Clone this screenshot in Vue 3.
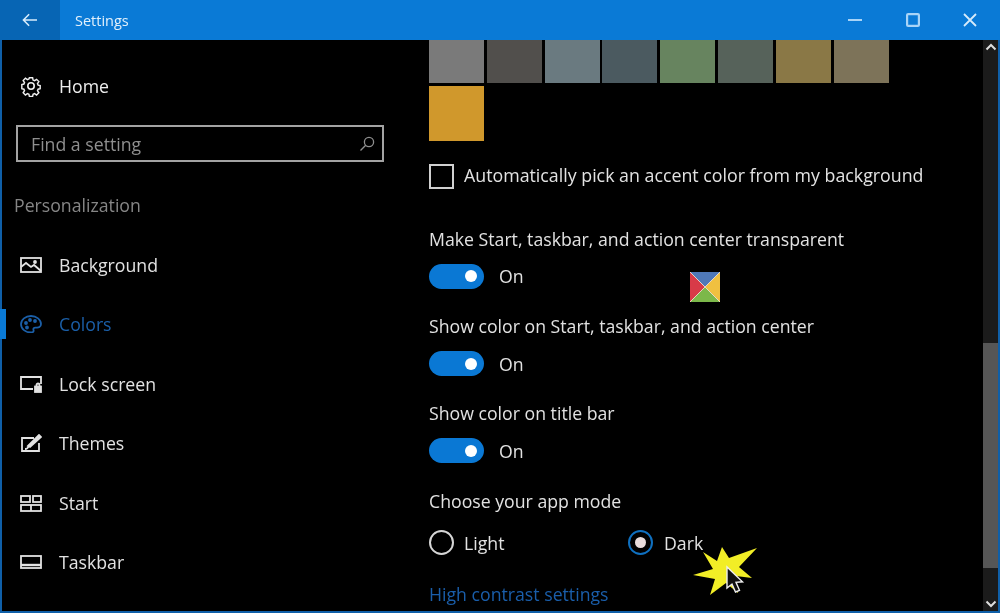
<script setup>
const swatches = ['#7a7a7a','#514f4c','#6a7a80','#4b5a60','#67845f','#56625a','#8a7846','#7d7359','#d0982c']
const nav = [
  { label: 'Background', icon: 'bg' },
  { label: 'Colors', icon: 'colors', active: true },
  { label: 'Lock screen', icon: 'lock' },
  { label: 'Themes', icon: 'themes' },
  { label: 'Start', icon: 'start' },
  { label: 'Taskbar', icon: 'taskbar' }
]
const toggles = ['Make Start, taskbar, and action center transparent','Show color on Start, taskbar, and action center','Show color on title bar']
</script>

<template>
  <div class="window">
    <header class="titlebar">
      <button class="back" aria-label="Back">
        <svg width="16" height="14" viewBox="0 0 18 16" fill="none" stroke="currentColor" stroke-width="1.800"><path d="M1 8h16M8 1.500 1.500 8 8 14.500"/></svg>
      </button>
      <span class="title">Settings</span>
      <div class="controls">
        <svg width="16" height="16" viewBox="0 0 16 16" fill="none" stroke="#a9d4f7" stroke-width="2"><path d="M1 8h14"/></svg>
        <svg width="16" height="16" viewBox="0 0 16 16" fill="none" stroke="#a9d4f7" stroke-width="2.200"><rect x="2.100" y="2.100" width="11.800" height="11.800" rx="1"/></svg>
        <svg width="16" height="16" viewBox="0 0 16 16" fill="none" stroke="#d5ebfb" stroke-width="1.800"><path d="m2 2 12 12M14 2 2 14"/></svg>
      </div>
    </header>

    <div class="body">
      <aside class="sidebar">
        <div class="home">
          <span class="nav-icon">
            <svg width="22" height="22" viewBox="0 0 22 22" fill="none" stroke="currentColor" stroke-width="1.600"><circle cx="11" cy="11" r="3.200"/><path d="M9.200 1.800h3.600l.5 2.600 1.700.7 2.200-1.500 2.500 2.500-1.500 2.200.7 1.700 2.300.5v3.600l-2.300.5-.7 1.700 1.500 2.200-2.500 2.500-2.200-1.500-1.700.7-.5 2.300H9.200l-.5-2.300-1.700-.7-2.200 1.500-2.500-2.500 1.500-2.200-.7-1.700-2.300-.5V9.300l2.300-.5.7-1.700-1.500-2.200 2.500-2.500L7 3.900l1.700-.7z" transform="translate(1.100 1.100) scale(.9)"/></svg>
          </span>
          <span>Home</span>
        </div>
        <div class="search">
          <span>Find a setting</span>
          <svg width="16" height="16" viewBox="0 0 16 16" fill="none" stroke="currentColor" stroke-width="1.300"><circle cx="10" cy="6" r="4.600"/><path d="M6.700 9.300 1.500 14.500"/></svg>
        </div>
        <div class="section">Personalization</div>
        <nav class="nav">
          <div v-for="item in nav" :key="item.label" class="nav-item" :class="{ active: item.active }">
            <span class="nav-icon">
              <svg width="22" height="18" viewBox="0 0 22 18" fill="none" stroke="currentColor" stroke-width="1.800">
                <template v-if="item.icon === 'bg'">
                  <rect x="1" y="2" width="20" height="14"/><path d="m1 11 5-4 5 4 3-2 7 6"/><circle cx="15" cy="6" r="1"/>
                </template>
                <template v-else-if="item.icon === 'colors'">
                  <path d="M11 1c5.500 0 10 3.600 10 8 0 3-2.500 4-5 3.600-2-.3-3 1-2.500 2.400.5 1.500-.5 2.500-2.500 2.500-5.500 0-10-3.700-10-8.300S5.500 1 11 1z"/><circle cx="6" cy="8" r="1"/><circle cx="10" cy="5" r="1"/><circle cx="15" cy="6" r="1"/><circle cx="7" cy="12.500" r="1"/>
                </template>
                <template v-else-if="item.icon === 'lock'">
                  <path d="M13 14H1V2h20v7"/><rect x="15" y="11.500" width="6" height="5.500" fill="currentColor"/><path d="M16.500 11.500V10a1.500 1.500 0 0 1 3 0v1.500"/>
                </template>
                <template v-else-if="item.icon === 'themes'">
                  <path d="M14 4H2v13h17V9"/><path d="m8 12 11-11 2 2-11 10z" fill="currentColor"/><path d="M5 15c2 0 3-1 3.500-2.500"/>
                </template>
                <template v-else-if="item.icon === 'start'">
                  <rect x="1" y="2" width="9" height="6"/><rect x="13" y="2" width="8" height="6"/><rect x="1" y="11" width="20" height="6"/><path d="M11 11v6"/>
                </template>
                <template v-else>
                  <rect x="1" y="3" width="20" height="12"/><path d="M1 12h20" stroke-width="2.400"/>
                </template>
              </svg>
            </span>
            <span>{{ item.label }}</span>
          </div>
        </nav>
      </aside>

      <main class="content">
        <div class="swatches">
          <div v-for="(c, i) in swatches" :key="i" class="swatch" :style="{ background: c }"></div>
        </div>
        <label class="auto"><span class="checkbox"></span><span class="auto-text">Automatically pick an accent color from my background</span></label>
        <div class="toggles">
          <div v-for="t in toggles" :key="t" class="toggle-row">
            <div class="label">{{ t }}</div>
            <div class="toggle-line"><span class="toggle"><i></i></span><span>On</span></div>
          </div>
        </div>
        <div class="label mode">Choose your app mode</div>
        <div class="radios">
          <div class="radio-item"><span class="radio"></span>Light</div>
          <div class="radio-item"><span class="radio on"><i></i></span>Dark</div>
        </div>
        <a class="link">High contrast settings</a>

        <svg class="logo" width="30" height="30" viewBox="0 0 31 31">
          <path d="M0 0h31L15.500 15.500z" fill="#4f78b8"/><path d="M31 0v31L15.500 15.500z" fill="#f0c040"/><path d="M0 31h31L15.500 15.500z" fill="#7cb84a"/><path d="M0 0v31l15.500-15.500z" fill="#d83a48"/><path d="m0 0 31 31M31 0 0 31" stroke="#e9d8c8" stroke-width="1"/>
        </svg>
        <svg class="spark" width="66" height="50" viewBox="0 0 66 50">
          <path d="M10 5 24 14 29 0 36 11 64 1 46 20 59 31 43 29 45 46 33 36 17 48 22 32 0 28 20 22Z" fill="#f2ee26"/>
          <path d="M34 20v21l5-4 3.500 8 4-1.700-3.500-8 6.500-.5z" fill="#111" stroke="#eee" stroke-width="1.400"/>
        </svg>
      </main>

      <div class="scrollbar">
        <svg class="chev" width="12" height="8" viewBox="0 0 12 8" fill="none" stroke="#ddd" stroke-width="2"><path d="m1.500 6.500 4.500-4.500 4.500 4.500"/></svg>
        <div class="track"><div class="thumb"></div></div>
        <svg class="chev" width="12" height="8" viewBox="0 0 12 8" fill="none" stroke="#ddd" stroke-width="2"><path d="m1.500 1.500 4.500 4.500 4.500-4.500"/></svg>
      </div>
    </div>
  </div>
</template>

<style>
html, body { margin: 0; background: #000; overflow: hidden; }
</style>

<style scoped>
.window { width: 1000px; height: 613px; display: flex; flex-direction: column; background: #000; color: #e2e2e2; font-family: "Open Sans", "Noto Sans", sans-serif; font-size: 17.700px; box-sizing: border-box; border: solid #0f5fa8; border-width: 0 2px 2px; filter: blur(.6px); }
.titlebar { height: 40px; margin: 0 -2px; flex: none; display: flex; align-items: center; background: #0a7ad6; color: #fff; }
.back { width: 60px; height: 40px; border: 0; padding: 0; background: #0765b4; color: #d8ecfb; display: flex; align-items: center; justify-content: center; }
.title { margin-left: 15px; font-size: 14.500px; color: #e2f0fb; }
.controls { margin-left: auto; width: 153px; padding-right: 22px; box-sizing: border-box; display: flex; justify-content: space-between; }
.body { flex: 1; display: flex; min-height: 0; }
.sidebar { width: 427px; flex: none; display: flex; flex-direction: column; }
.home { display: flex; align-items: center; height: 26px; margin-top: 33px; padding-left: 18px; color: #eee; }
.nav-icon { width: 22px; margin-right: 17px; display: flex; justify-content: center; }
.search { width: 368px; height: 37px; margin: 26px 0 0 14px; box-sizing: border-box; border: 2.500px solid #a3a3a3; display: flex; align-items: center; justify-content: space-between; padding: 0 7px 0 13px; color: #8f8f8f; }
.section { margin: 28px 0 0 12px; height: 30px; line-height: 30px; color: #868686; }
.nav { margin-top: 15px; display: flex; flex-direction: column; }
.nav-item { height: 59.500px; display: flex; align-items: center; padding-left: 18px; position: relative; }
.nav-item.active { color: #1b5fa8; }
.nav-item.active::before { content: ""; position: absolute; left: -2px; top: 14px; width: 6px; height: 30px; background: #0a7ad6; }
.content { position: relative; flex: 1; min-width: 0; }
.swatches { display: grid; grid-template-columns: repeat(8, 55px); grid-template-rows: 43px 55px; gap: 3px 2.800px; }
.swatch { width: 55px; }
.auto { display: flex; align-items: center; margin-top: 22px; height: 26px; }
.auto-text { position: relative; top: -1px; font-size: 17.800px; }
.checkbox { width: 25px; height: 25px; box-sizing: border-box; border: 2px solid #d0d0d0; margin-right: 10px; }
.toggles { margin-top: 37px; display: flex; flex-direction: column; gap: 14px; }
.toggle-row { height: 73.200px; }
.label { height: 26px; line-height: 26px; }
.toggle-line { display: flex; align-items: center; height: 26px; margin-top: 11.400px; gap: 15px; }
.toggle { width: 55px; height: 25px; border-radius: 13px; background: #0a78d4; display: flex; align-items: center; justify-content: flex-end; padding-right: 7px; box-sizing: border-box; }
.toggle i { width: 12px; height: 12px; border-radius: 50%; background: #fff; }
.mode { margin-top: 14px; }
.radios { display: flex; margin-top: 16px; }
.radio-item { width: 199px; display: flex; align-items: center; gap: 10px; height: 26px; }
.radio-item:last-child { gap: 11px; }
.radio { width: 25px; height: 25px; box-sizing: border-box; border: 2px solid #d6d6d6; border-radius: 50%; display: flex; align-items: center; justify-content: center; }
.radio.on { border-color: #0f70c0; }
.radio i { width: 11px; height: 11px; border-radius: 50%; background: #e8dcdc; }
.link { display: block; margin-top: 26px; color: #1a5eaa; }
.logo { position: absolute; left: 261px; top: 232px; }
.spark { position: absolute; left: 264px; top: 507px; }
.scrollbar { width: 15px; margin-left: auto; flex: none; display: flex; flex-direction: column; align-items: center; background: #1b1b1b; }
.chev { flex: none; margin: 3px 0; }
.track { flex: 1; width: 100%; padding-top: 289px; box-sizing: border-box; }
.thumb { height: 225px; background: #565656; }
</style>
